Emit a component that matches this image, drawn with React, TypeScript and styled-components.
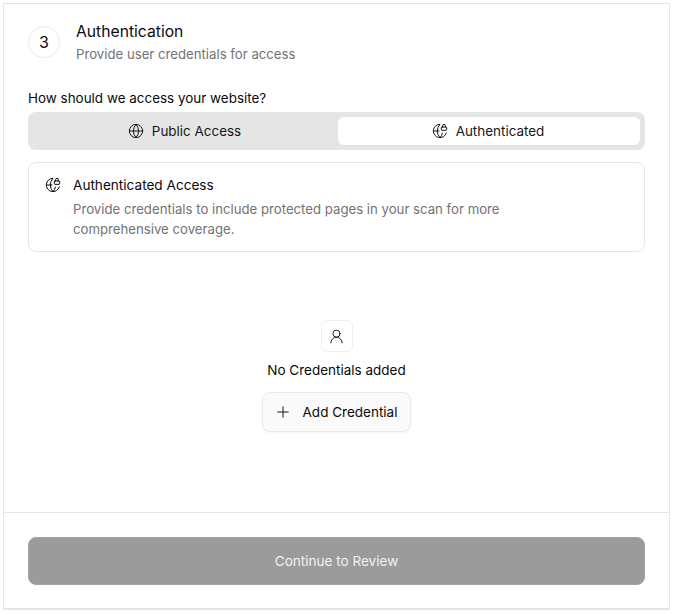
import styled, { createGlobalStyle } from "styled-components";
import { Globe, GlobeLock, Plus, UserRound } from "lucide-react";

const GlobalStyle = createGlobalStyle`
  html, body {
    margin: 0;
    padding: 0;
    background-color: #ffffff;
    font-family: Inter, "Liberation Sans", sans-serif;
    color: #0a0a0a;
  }
  * {
    box-sizing: border-box;
  }
`;

const Page = styled.main`
  width: 674px;
  height: 614px;
  padding: 3px 4px 0 3px;
  overflow: hidden;
`;

const Panel = styled.section`
  width: 667px;
  height: 607px;
  border: 1px solid #e5e5e5;
  display: flex;
  flex-direction: column;
`;

const Body = styled.div`
  height: 508px;
  padding: 20px 24px 0;
  display: flex;
  flex-direction: column;
`;

const Header = styled.header`
  display: flex;
  gap: 16px;
  height: 42px;
`;

const StepCircle = styled.div`
  width: 32px;
  height: 32px;
  margin-top: 2px;
  border: 1px solid #ebebeb;
  border-radius: 50%;
  display: flex;
  align-items: center;
  justify-content: center;
  font-size: 16px;
`;

const HeaderText = styled.div`
  margin-top: -3px;
  display: flex;
  flex-direction: column;
`;

const Title = styled.h2`
  margin: 0;
  font-size: 15.7px;
  font-weight: 400;
  line-height: 22px;
`;

const Subtitle = styled.p`
  margin: 0;
  font-size: 13.2px;
  line-height: 22px;
  color: #737373;
`;

const Question = styled.label`
  display: block;
  margin-top: 22px;
  font-size: 13.45px;
  line-height: 20px;
`;

const Segment = styled.div`
  margin-top: 4px;
  height: 38px;
  padding: 5px;
  border-radius: 8px;
  background-color: #e5e5e5;
  display: grid;
  grid-template-columns: 303px 302px;
  gap: 2px;
`;

const SegmentTab = styled.button<{ $active?: boolean }>`
  border: none;
  border-radius: 6px;
  padding: 0 ${(p) => (p.$active ? "2px" : "0")} 0 0;
  background-color: ${(p) => (p.$active ? "#ffffff" : "transparent")};
  color: #171717;
  font-family: inherit;
  font-size: 13.45px;
  font-weight: 400;
  display: flex;
  align-items: center;
  justify-content: center;
  gap: 8px;
`;

const InfoCard = styled.div`
  margin-top: 12px;
  height: 90px;
  padding: 13px 16px;
  border: 1px solid #e5e5e5;
  border-radius: 8px;
  display: flex;
  gap: 12px;
`;

const InfoIcon = styled.div`
  height: 18px;
  display: flex;
  align-items: center;
`;

const InfoTitle = styled.div`
  font-size: 13.6px;
  line-height: 18px;
`;

const InfoText = styled.p`
  margin: 5px 0 0;
  font-size: 13.2px;
  line-height: 20px;
  color: #737373;
`;

const EmptyState = styled.div`
  margin-top: 68px;
  display: flex;
  flex-direction: column;
  align-items: center;
`;

const EmptyIcon = styled.div`
  width: 32px;
  height: 32px;
  border: 1px solid #f0f0f0;
  border-radius: 6px;
  display: flex;
  align-items: center;
  justify-content: center;
`;

const EmptyText = styled.div`
  margin-top: 8px;
  font-size: 13.5px;
  line-height: 20px;
`;

const AddButton = styled.button`
  margin-top: 12px;
  width: 149px;
  height: 40px;
  padding: 0 8px 0 6px;
  border: 1px solid #ebebeb;
  border-radius: 8px;
  background-color: #fafafa;
  box-shadow: 0 1px 2px rgba(0, 0, 0, 0.05);
  color: #0a0a0a;
  font-family: inherit;
  font-size: 13.5px;
  display: flex;
  align-items: center;
  justify-content: center;
  gap: 11px;
`;

const Footer = styled.footer`
  height: 97px;
  border-top: 1px solid #e5e5e5;
  border-bottom: 1px solid #e5e5e5;
  padding: 24px 24px 0;
`;

const ContinueButton = styled.button`
  width: 100%;
  height: 48px;
  border: 1px solid #a3a3a3;
  border-radius: 8px;
  background-color: #9b9b9b;
  color: #f2f2f2;
  font-family: inherit;
  font-size: 13.55px;
  font-weight: 400;
`;

export default function App() {
  return (
    <Page>
      <GlobalStyle />
      <Panel>
        <Body>
          <Header>
            <StepCircle>3</StepCircle>
            <HeaderText>
              <Title>Authentication</Title>
              <Subtitle>Provide user credentials for access</Subtitle>
            </HeaderText>
          </Header>

          <Question>How should we access your website?</Question>
          <Segment>
            <SegmentTab>
              <Globe size={16} strokeWidth={1.5} />
              Public Access
            </SegmentTab>
            <SegmentTab $active>
              <GlobeLock size={16} strokeWidth={1.5} />
              Authenticated
            </SegmentTab>
          </Segment>

          <InfoCard>
            <InfoIcon>
              <GlobeLock size={16} strokeWidth={1.5} />
            </InfoIcon>
            <div>
              <InfoTitle>Authenticated Access</InfoTitle>
              <InfoText>
                Provide credentials to include protected pages in your scan for more
                <br />
                comprehensive coverage.
              </InfoText>
            </div>
          </InfoCard>

          <EmptyState>
            <EmptyIcon>
              <UserRound size={17} strokeWidth={1.25} />
            </EmptyIcon>
            <EmptyText>No Credentials added</EmptyText>
            <AddButton>
              <Plus size={18} strokeWidth={1.25} />
              Add Credential
            </AddButton>
          </EmptyState>
        </Body>

        <Footer>
          <ContinueButton>Continue to Review</ContinueButton>
        </Footer>
      </Panel>
    </Page>
  );
}
